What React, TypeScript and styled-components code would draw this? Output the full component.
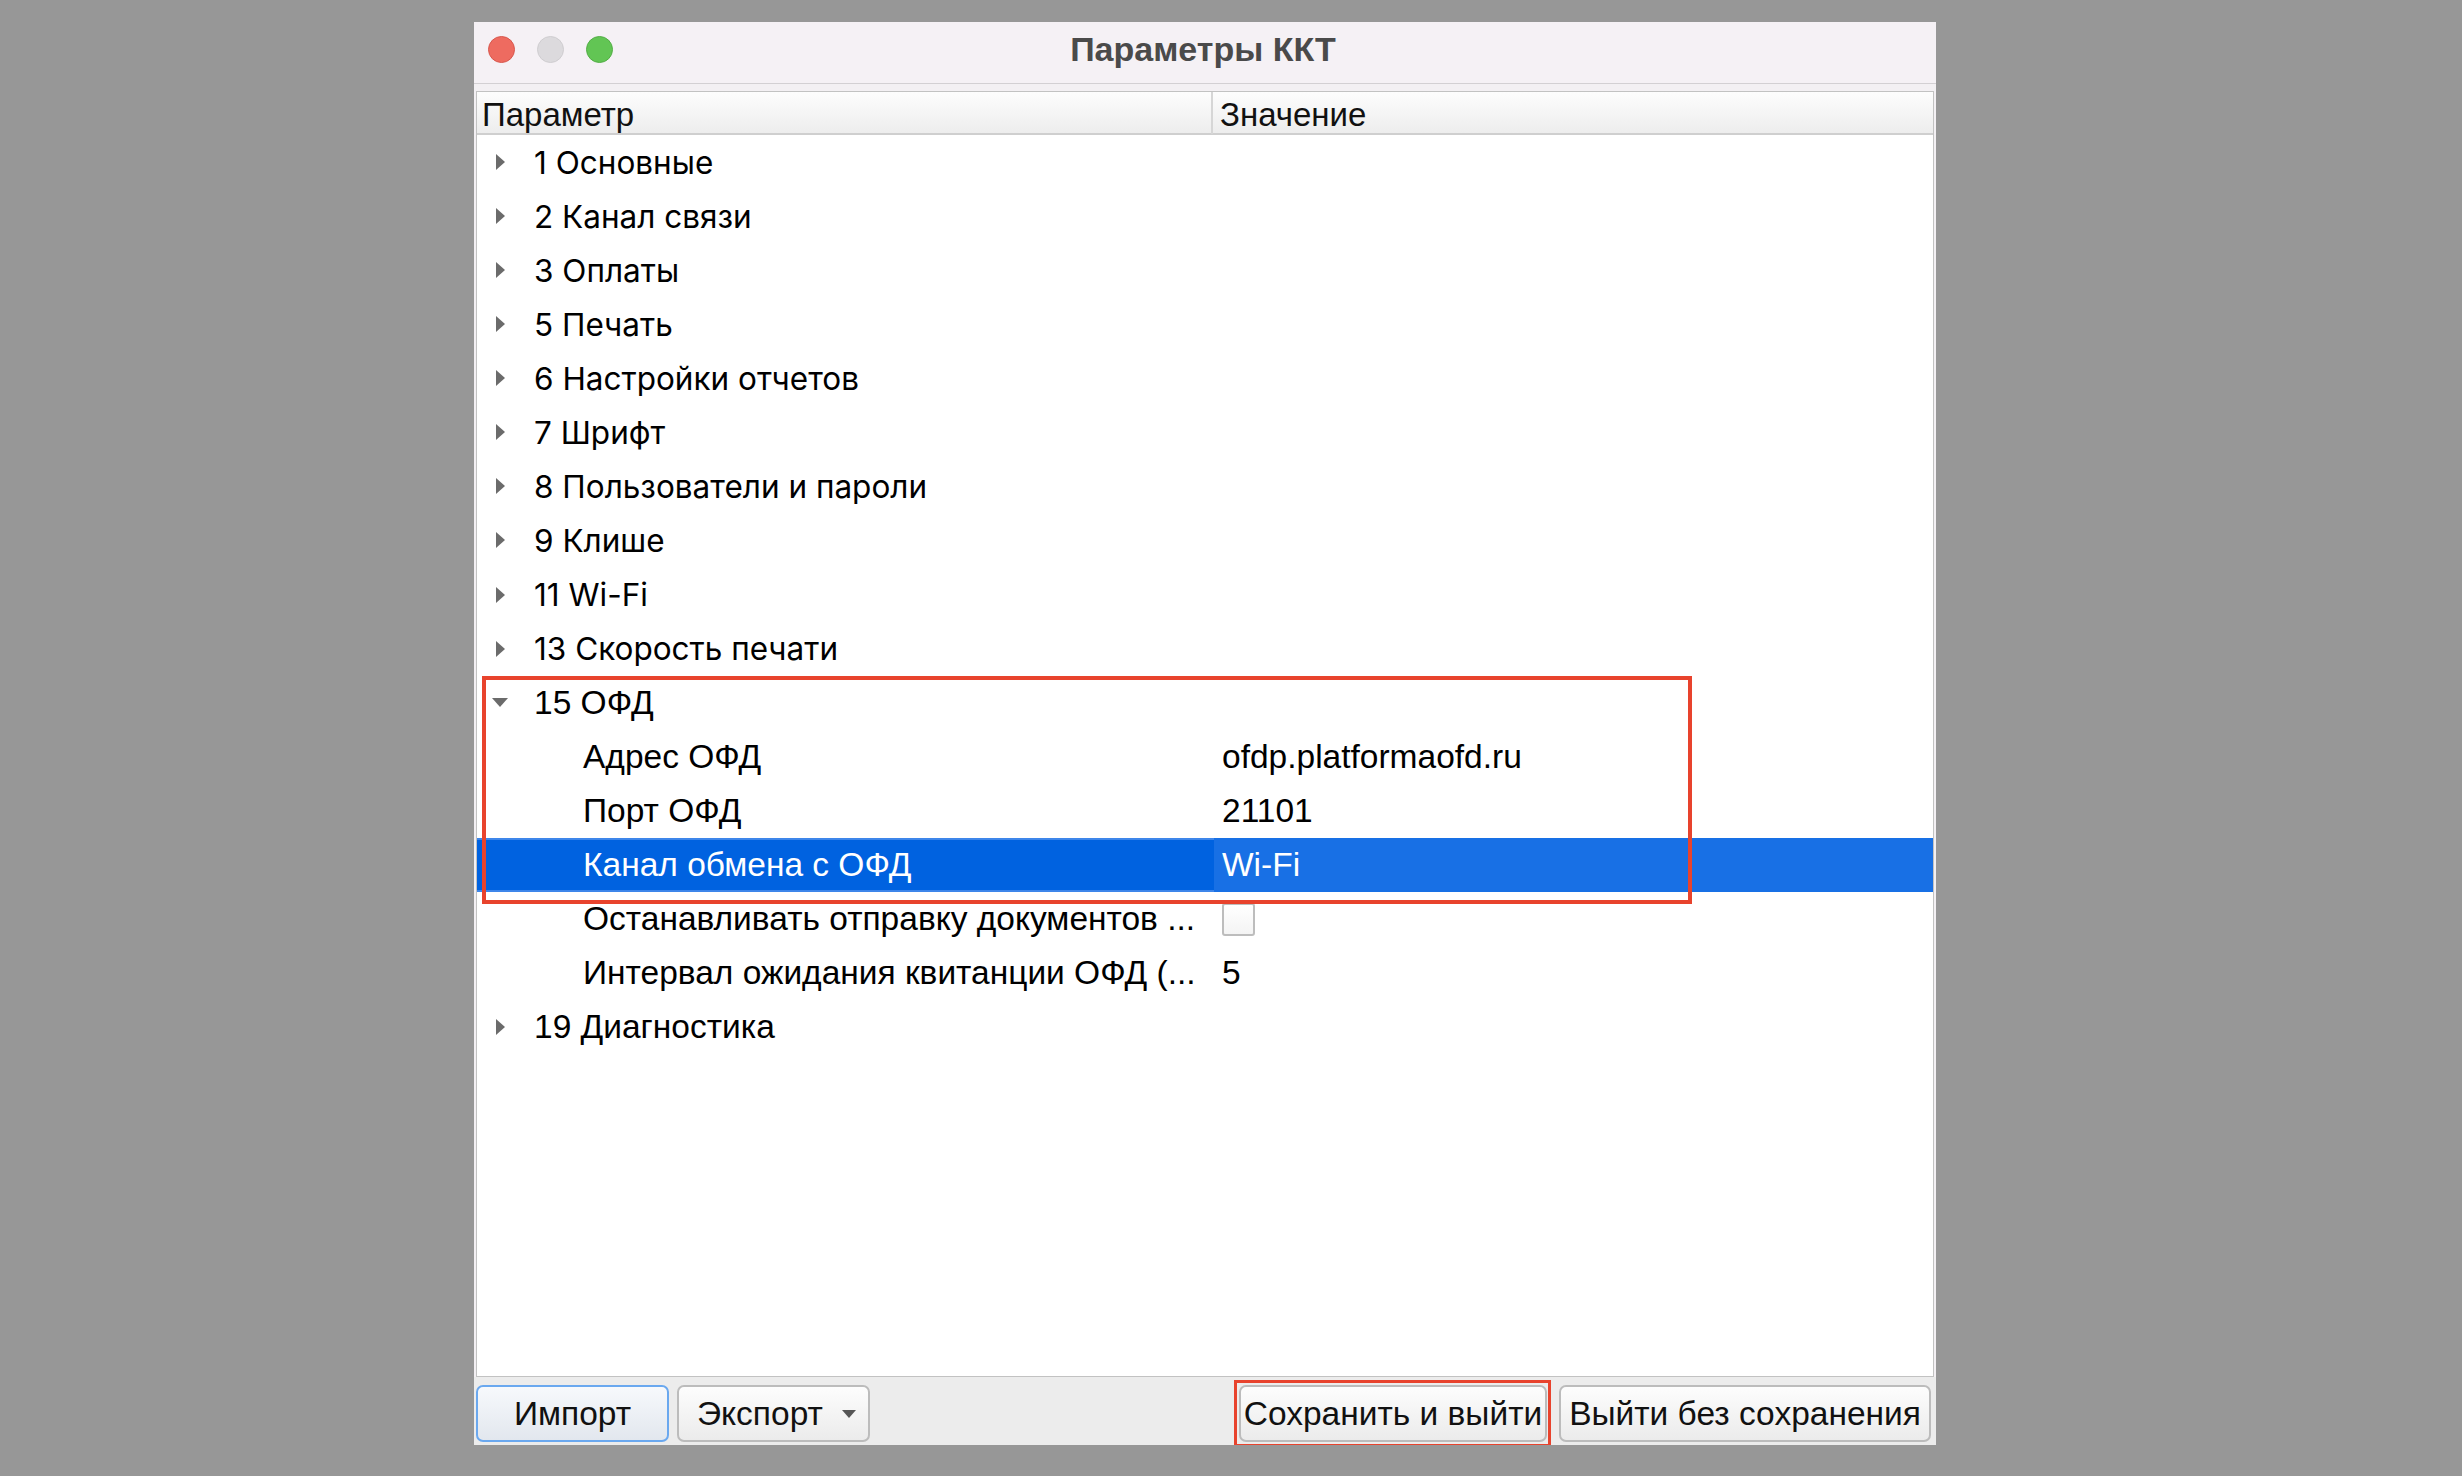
import React from "react";
import styled, { createGlobalStyle, css } from "styled-components";

const GlobalStyle = createGlobalStyle`
  html, body { margin: 0; padding: 0; background: #979797; }
  body { font-family: "Liberation Sans", Arial, sans-serif; }
  * { box-sizing: border-box; }
`;

const Page = styled.div`
  width: 2462px;
  height: 1476px;
  padding: 22px 0 0 474px;
  background: #979797;
`;

const Window = styled.div`
  width: 1462px;
  height: 1423px;
  display: flex;
  flex-direction: column;
  background: #ececec;
  overflow: hidden;
`;

const TitleBar = styled.div`
  height: 62px;
  flex: none;
  display: grid;
  grid-template-columns: 1fr auto 1fr;
  align-items: center;
  background: #f5f1f5;
  border-bottom: 1px solid #d3d0d3;
  padding: 0 0 6px 14px;
`;

const Lights = styled.div`
  display: flex;
  gap: 22px;
  align-items: center;
`;

const Light = styled.span<{ $c: string; $b: string }>`
  width: 27px;
  height: 27px;
  border-radius: 50%;
  background: ${(p) => p.$c};
  border: 1px solid ${(p) => p.$b};
`;

const Title = styled.div`
  font-family: "Liberation Sans", Arial, sans-serif;
  font-weight: 700;
  font-size: 34px;
  color: #4a4a4a;
  margin-right: 18px;
`;

const Body = styled.div`
  flex: 1;
  display: flex;
  flex-direction: column;
  background: #f3f0f3;
  padding: 7px 2px 0 2px;
  min-height: 0;
`;

const Pane = styled.div`
  flex: 1;
  display: flex;
  flex-direction: column;
  background: #fff;
  border: 1px solid #c2c2c2;
  min-height: 0;
`;

const Header = styled.div`
  height: 43px;
  flex: none;
  display: grid;
  grid-template-columns: 734px 1fr;
  background: linear-gradient(#fdfdfd, #ededed);
  border-bottom: 2px solid #cfcfcf;
`;

const HeaderCell = styled.div<{ $sep?: boolean }>`
  display: flex;
  align-items: center;
  padding-left: ${(p) => (p.$sep ? "7px" : "5px")};
  padding-top: 4px;
  font-size: 33px;
  color: #111;
  ${(p) =>
    p.$sep &&
    css`
      border-left: 2px solid #d6d6d6;
    `}
`;

const RowList = styled.div`
  display: flex;
  flex-direction: column;
`;

const Highlight = styled.div`
  position: relative;
  display: flex;
  flex-direction: column;
  &::after {
    content: "";
    position: absolute;
    left: 5px;
    top: 0;
    width: 1202px;
    height: 220px;
    border: 4px solid #e8432d;
    pointer-events: none;
  }
`;

const Row = styled.div<{ $selected?: boolean }>`
  height: 54.07px;
  display: grid;
  grid-template-columns: 734px 1fr;
  align-items: stretch;
  background: ${(p) => (p.$selected ? "#0062e0" : "transparent")};
  color: ${(p) => (p.$selected ? "#fff" : "#000")};
  ${(p) =>
    p.$selected &&
    css`
      box-shadow: inset 0 2px 0 #3d86ea, inset 0 -2px 0 #3d86ea;
    `}
`;

const NameCell = styled.div<{ $level: number; $face: "sf" | "helv" }>`
  display: flex;
  align-items: center;
  padding-left: ${(p) => (p.$level === 0 ? "14px" : "106px")};
  white-space: nowrap;
  overflow: hidden;
  ${(p) =>
    p.$face === "sf"
      ? css`
          font-family: "Inter", "Liberation Sans", sans-serif;
          font-size: 31.5px;
        `
      : css`
          font-family: "Liberation Sans", Arial, sans-serif;
          font-size: 33.5px;
        `}
`;

const Arrow = styled.span`
  width: 18px;
  height: 18px;
  margin-right: 25px;
  display: flex;
  align-items: center;
  justify-content: center;
  flex: none;
`;

const ValueCell = styled.div<{ $selected?: boolean }>`
  display: flex;
  align-items: center;
  padding-left: 8px;
  margin-left: 3px;
  font-size: 33.5px;
  font-family: "Liberation Sans", Arial, sans-serif;
  background: ${(p) => (p.$selected ? "#1870e5" : "transparent")};
`;

const Checkbox = styled.span`
  width: 33px;
  height: 33px;
  margin-top: 2px;
  border: 2px solid #bdbdbd;
  border-radius: 3px;
  background: linear-gradient(#ffffff, #f4f4f4);
`;

const Footer = styled.div`
  height: 68px;
  flex: none;
  display: flex;
  align-items: flex-start;
  padding: 8px 5px 0 2px;
  background: #ececec;
`;

const ButtonGroup = styled.div<{ $gap: number }>`
  display: flex;
  gap: ${(p) => p.$gap}px;
`;

const Spacer = styled.div`
  flex: 1;
`;

const Marked = styled.div`
  position: relative;
  display: flex;
  &::after {
    content: "";
    position: absolute;
    left: -5px;
    right: -4px;
    top: -5px;
    bottom: -5px;
    border: 3px solid #e8432d;
    pointer-events: none;
  }
`;

const Button = styled.button<{ $w: number; $focus?: boolean; $menu?: boolean }>`
  width: ${(p) => p.$w}px;
  height: 57px;
  border-radius: 7px;
  border: 2px solid ${(p) => (p.$focus ? "#6aa8ef" : "#bcbcbc")};
  background: ${(p) =>
    p.$focus
      ? "linear-gradient(#f7f9fc, #e2e7ee)"
      : "linear-gradient(#fdfdfd, #ebebeb)"};
  font-family: "Liberation Sans", Arial, sans-serif;
  font-size: 33.5px;
  color: #111;
  display: flex;
  align-items: center;
  justify-content: ${(p) => (p.$menu ? "space-between" : "center")};
  padding: ${(p) => (p.$menu ? "0 12px 0 18px" : "0")};
`;

const RightTri = () => (
  <svg width="11" height="18" viewBox="0 0 11 18">
    <path d="M1 1 L10 9 L1 17 Z" fill="#6b6b6b" />
  </svg>
);

const DownTri = () => (
  <svg width="18" height="11" viewBox="0 0 18 11">
    <path d="M1 1 L17 1 L9 10 Z" fill="#6b6b6b" />
  </svg>
);

const SmallDown = () => (
  <svg width="14" height="8" viewBox="0 0 14 8">
    <path d="M0 0 L14 0 L7 8 Z" fill="#555" />
  </svg>
);

type Item = {
  label: string;
  level: number;
  arrow?: "right" | "down";
  face: "sf" | "helv";
  value?: string;
  checkbox?: boolean;
  selected?: boolean;
};

const top: Item[] = [
  "1 Основные",
  "2 Канал связи",
  "3 Оплаты",
  "5 Печать",
  "6 Настройки отчетов",
  "7 Шрифт",
  "8 Пользователи и пароли",
  "9 Клише",
  "11 Wi-Fi",
  "13 Скорость печати",
].map((label) => ({ label, level: 0, arrow: "right", face: "sf" }));

const ofd: Item[] = [
  { label: "15 ОФД", level: 0, arrow: "down", face: "helv" },
  { label: "Адрес ОФД", level: 1, face: "helv", value: "ofdp.platformaofd.ru" },
  { label: "Порт ОФД", level: 1, face: "helv", value: "21101" },
  { label: "Канал обмена с ОФД", level: 1, face: "helv", value: "Wi-Fi", selected: true },
];

const rest: Item[] = [
  { label: "Останавливать отправку документов ...", level: 1, face: "helv", checkbox: true },
  { label: "Интервал ожидания квитанции ОФД (...", level: 1, face: "helv", value: "5" },
  { label: "19 Диагностика", level: 0, arrow: "right", face: "helv" },
];

const TreeRow = ({ item }: { item: Item }) => (
  <Row $selected={item.selected}>
    <NameCell $level={item.level} $face={item.face}>
      {item.arrow && <Arrow>{item.arrow === "right" ? <RightTri /> : <DownTri />}</Arrow>}
      {item.label}
    </NameCell>
    <ValueCell $selected={item.selected}>
      {item.checkbox ? <Checkbox /> : item.value}
    </ValueCell>
  </Row>
);

export default function App() {
  return (
    <>
      <GlobalStyle />
      <Page>
        <Window>
          <TitleBar>
            <Lights>
              <Light $c="#ee6b60" $b="#d8574d" />
              <Light $c="#dcdadd" $b="#cfcdd0" />
              <Light $c="#62c554" $b="#53ae46" />
            </Lights>
            <Title>Параметры ККТ</Title>
            <div />
          </TitleBar>
          <Body>
            <Pane>
              <Header>
                <HeaderCell>Параметр</HeaderCell>
                <HeaderCell $sep>Значение</HeaderCell>
              </Header>
              <RowList>
                {top.map((it) => (
                  <TreeRow key={it.label} item={it} />
                ))}
                <Highlight>
                  {ofd.map((it) => (
                    <TreeRow key={it.label} item={it} />
                  ))}
                </Highlight>
                {rest.map((it) => (
                  <TreeRow key={it.label} item={it} />
                ))}
              </RowList>
            </Pane>
          </Body>
          <Footer>
            <ButtonGroup $gap={8}>
              <Button $w={193} $focus>Импорт</Button>
              <Button $w={193} $menu>
                Экспорт
                <SmallDown />
              </Button>
            </ButtonGroup>
            <Spacer />
            <ButtonGroup $gap={12}>
              <Marked>
                <Button $w={308}>Сохранить и выйти</Button>
              </Marked>
              <Button $w={372}>Выйти без сохранения</Button>
            </ButtonGroup>
          </Footer>
        </Window>
      </Page>
    </>
  );
}
